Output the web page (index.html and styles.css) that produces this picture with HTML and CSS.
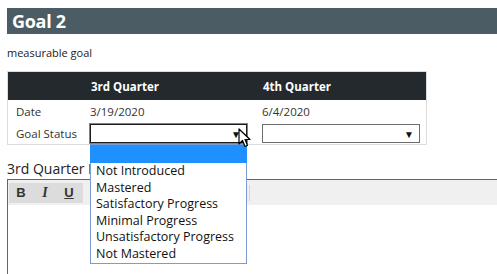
FILE: index.html
```html
<!DOCTYPE html>
<html>
<head>
    <meta charset="utf-8">
    <link rel="stylesheet" href="styles.css">
</head>
<body>
    <div class="goal-header">Goal 2</div>
    <div class="goal-text">measurable goal</div>

    <table class="quarters">
        <tr class="head-row">
            <th class="label-col"></th>
            <th class="q-col">3rd Quarter</th>
            <th>4th Quarter</th>
        </tr>
        <tr>
            <td class="label-col">Date</td>
            <td>3/19/2020</td>
            <td>6/4/2020</td>
        </tr>
        <tr>
            <td class="label-col">Goal Status</td>
            <td>
                <div class="select-wrap">
                    <div class="select focused"><span class="arrow">▼</span></div>
                    <ul class="dropdown">
                        <li class="selected">&nbsp;</li>
                        <li>Not Introduced</li>
                        <li>Mastered</li>
                        <li>Satisfactory Progress</li>
                        <li>Minimal Progress</li>
                        <li>Unsatisfactory Progress</li>
                        <li>Not Mastered</li>
                    </ul>
                    <svg class="cursor" width="14" height="20" viewBox="0 0 14 20">
                        <path d="M1 1 L1 16 L4.5 12.5 L7 18.5 L9.5 17.5 L7 11.5 L12 11.5 Z" fill="#fff" stroke="#000" stroke-width="1.2" stroke-linejoin="round"/>
                    </svg>
                </div>
            </td>
            <td>
                <div class="select"><span class="arrow">▼</span></div>
            </td>
        </tr>
    </table>

    <div class="comment-label">3rd Quarter Progress</div>
    <div class="editor">
        <div class="toolbar">
            <div class="btn-group">
                <span class="tb-btn bold">B</span>
                <span class="tb-btn italic">I</span>
                <span class="tb-btn under">U</span>
            </div>
            <div class="tb-sep"></div>
        </div>
        <div class="editor-body"></div>
    </div>
</body>
</html>
```

FILE: styles.css
```css
body {
    margin: 0;
    padding: 8px 0 0 7px;
    font-family: "Open Sans", "Segoe UI", sans-serif;
    font-size: 11px;
    color: #222;
    overflow: hidden;
}

.goal-header {
    background: #4b5c65;
    color: #fff;
    font-size: 18px;
    font-weight: bold;
    height: 26px;
    line-height: 26px;
    padding-left: 5px;
    letter-spacing: -0.3px;
}

.goal-text {
    margin-top: 11px;
    line-height: 15px;
    color: #222;
}

.quarters {
    margin-top: 11px;
    width: 420px;
    table-layout: fixed;
    border-collapse: collapse;
    border: 1px solid #dcdcdc;
    font-size: 11.5px;
}

.quarters th {
    background: #24292d;
    color: #fff;
    text-align: left;
    font-weight: bold;
    height: 28px;
    padding: 0 0 0 1px;
}

.quarters td {
    padding: 0;
    height: 22px;
    color: #333;
}

.quarters .label-col {
    width: 74px;
    padding-left: 8px;
}

.quarters .q-col {
    width: 171px;
}

.select-wrap {
    position: relative;
    width: 157px;
}

.select {
    position: relative;
    width: 158px;
    height: 19px;
    box-sizing: border-box;
    border: 1px solid #6c6c6c;
    background: #fff;
    margin-top: 1px;
}

.select.focused {
    width: 157px;
    border: 1px solid #1c1c1c;
    outline: 1px solid #1fa3dc;
}

.arrow {
    position: absolute;
    right: 5px;
    top: 2px;
    font-size: 10px;
    line-height: 14px;
    color: #111;
}

.dropdown {
    position: absolute;
    left: 0;
    top: 20px;
    width: 157px;
    margin: 0;
    padding: 0 0 1px;
    list-style: none;
    background: #fff;
    border: 1px solid #7a9cd3;
    box-sizing: border-box;
    font-size: 12.5px;
    color: #111;
    z-index: 2;
}

.dropdown li {
    height: 16.5px;
    line-height: 16.5px;
    padding-left: 5px;
    white-space: nowrap;
}

.dropdown li.selected {
    background: #1e90ff;
    height: 18px;
    margin: 0 -1px 0 -1px;
}

.cursor {
    position: absolute;
    left: 148px;
    top: 4px;
    z-index: 3;
}

.comment-label {
    margin-top: 15px;
    font-size: 14px;
    line-height: 17px;
    color: #222;
}

.editor {
    margin-top: 2px;
    border-top: 1px solid #666;
    border-left: 1px solid #666;
    height: 100px;
}

.toolbar {
    background: #f0f0f0;
    height: 25px;
    display: flex;
    align-items: center;
    padding-left: 1px;
}

.btn-group {
    display: flex;
    background: #dcdcdc;
    height: 20px;
    width: 74px;
    align-items: center;
}

.tb-btn {
    width: 24px;
    text-align: center;
    font-family: "Liberation Sans", sans-serif;
    font-weight: bold;
    font-size: 13px;
    color: #333;
}

.tb-btn.italic {
    font-style: italic;
    font-family: "Liberation Serif", serif;
    font-size: 14px;
}

.tb-btn.under {
    text-decoration: underline;
}

.tb-sep {
    margin-left: 166px;
    width: 1px;
    height: 16px;
    background: #d6d6d6;
}
```
